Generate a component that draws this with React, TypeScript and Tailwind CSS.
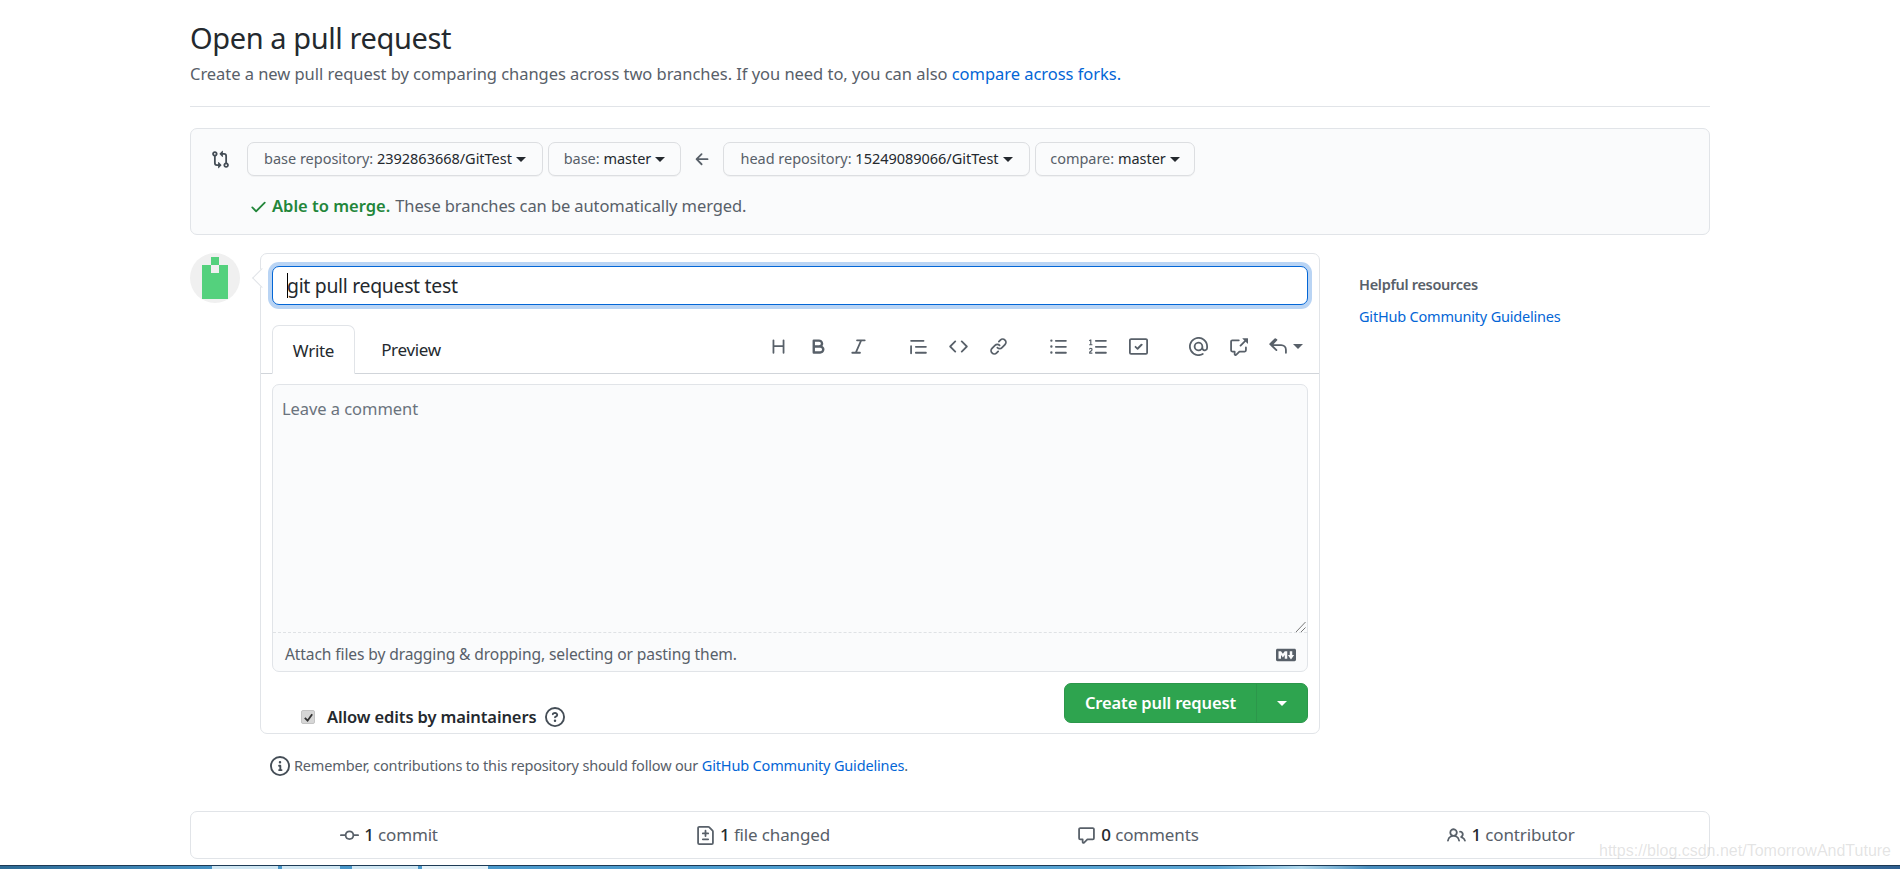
import React from "react";

const P: Record<string, string> = {
  compare: "M9.573.677L7.177 3.073a.25.25 0 000 .354l2.396 2.396A.25.25 0 0010 5.646V4h1a1 1 0 011 1v5.628a2.251 2.251 0 101.5 0V5A2.5 2.5 0 0011 2.5h-1V.854a.25.25 0 00-.427-.177zM6 12v-1.646a.25.25 0 01.427-.177l2.396 2.396a.25.25 0 010 .354l-2.396 2.396A.25.25 0 016 15.146V13.5H5A2.5 2.5 0 012.5 11V5.372a2.25 2.25 0 111.5 0V11a1 1 0 001 1h1zm6.75 0a.75.75 0 100 1.5.75.75 0 000-1.5zM4 3.25a.75.75 0 11-1.5 0 .75.75 0 011.5 0z",
  check: "M13.78 4.22a.75.75 0 010 1.06l-7.25 7.25a.75.75 0 01-1.06 0L2.22 9.28a.75.75 0 011.06-1.06L6 10.94l6.72-6.72a.75.75 0 011.06 0z",
  arrow: "M7.78 12.53a.75.75 0 01-1.06 0L2.47 8.28a.75.75 0 010-1.06l4.25-4.25a.75.75 0 011.06 1.06L4.81 7h7.44a.75.75 0 010 1.5H4.81l2.97 2.97a.75.75 0 010 1.06z",
  heading: "M3.75 2a.75.75 0 01.75.75V7h7V2.75a.75.75 0 011.5 0v10.5a.75.75 0 01-1.5 0V8.5h-7v4.75a.75.75 0 01-1.5 0V2.75A.75.75 0 013.75 2z",
  bold: "M4 2a1 1 0 00-1 1v10a1 1 0 001 1h5.5a3.5 3.5 0 001.852-6.47A3.5 3.5 0 008.5 2H4zm4.5 5a1.5 1.5 0 100-3H5v3h3.5zM5 9v3h4.5a1.5 1.5 0 000-3H5z",
  italic: "M6 2.75A.75.75 0 016.75 2h6.5a.75.75 0 010 1.5h-2.505l-3.858 9H9.25a.75.75 0 010 1.5h-6.5a.75.75 0 010-1.5h2.505l3.858-9H6.75A.75.75 0 016 2.75z",
  quote: "M1.75 2.5a.75.75 0 000 1.5h10.5a.75.75 0 000-1.5H1.75zm4 5a.75.75 0 000 1.5h8.5a.75.75 0 000-1.5h-8.5zm0 5a.75.75 0 000 1.5h8.5a.75.75 0 000-1.5h-8.5zM2.5 7.75a.75.75 0 00-1.5 0v6a.75.75 0 001.5 0v-6z",
  code: "M4.72 3.22a.75.75 0 011.06 1.06L2.06 8l3.72 3.72a.75.75 0 11-1.06 1.06L.47 8.53a.75.75 0 010-1.06l4.25-4.25zm6.56 0a.75.75 0 10-1.06 1.06L13.94 8l-3.72 3.72a.75.75 0 101.06 1.06l4.25-4.25a.75.75 0 000-1.06l-4.25-4.25z",
  link: "M7.775 3.275a.75.75 0 001.06 1.06l1.25-1.25a2 2 0 112.83 2.83l-2.5 2.5a2 2 0 01-2.83 0 .75.75 0 00-1.06 1.06 3.5 3.5 0 004.95 0l2.5-2.5a3.5 3.5 0 00-4.95-4.95l-1.25 1.25zm-4.69 9.64a2 2 0 010-2.83l2.5-2.5a2 2 0 012.83 0 .75.75 0 001.06-1.06 3.5 3.5 0 00-4.95 0l-2.5 2.5a3.5 3.5 0 004.95 4.95l1.25-1.25a.75.75 0 00-1.06-1.06l-1.25 1.25a2 2 0 01-2.83 0z",
  ul: "M2 4a1 1 0 100-2 1 1 0 000 2zm3.75-1.5a.75.75 0 000 1.5h8.5a.75.75 0 000-1.5h-8.5zm0 5a.75.75 0 000 1.5h8.5a.75.75 0 000-1.5h-8.5zm0 5a.75.75 0 000 1.5h8.5a.75.75 0 000-1.5h-8.5zM3 8a1 1 0 11-2 0 1 1 0 012 0zm-1 6a1 1 0 100-2 1 1 0 000 2z",
  ol: "M2.003 2.5a.5.5 0 00-.723-.447l-1.003.5a.5.5 0 00.446.895l.28-.14V6H.5a.5.5 0 000 1h2.006a.5.5 0 100-1h-.503V2.5zM5 3.25a.75.75 0 01.75-.75h8.5a.75.75 0 010 1.5h-8.5A.75.75 0 015 3.25zm0 5a.75.75 0 01.75-.75h8.5a.75.75 0 010 1.5h-8.5A.75.75 0 015 8.25zm0 5a.75.75 0 01.75-.75h8.5a.75.75 0 010 1.5h-8.5a.75.75 0 01-.75-.75zM.924 10.32l.003-.004a.851.851 0 01.144-.153A.66.66 0 011.5 10c.195 0 .306.068.374.146a.57.57 0 01.128.376c0 .453-.269.682-.8 1.078l-.035.025C.692 11.98 0 12.495 0 13.5a.5.5 0 00.5.5h2.003a.5.5 0 000-1H1.146c.132-.197.351-.372.654-.597l.047-.035c.47-.35 1.156-.858 1.156-1.845 0-.365-.118-.744-.377-1.038-.268-.303-.658-.484-1.126-.484-.48 0-.84.202-1.068.392a1.858 1.858 0 00-.348.384l-.007.011-.002.004-.001.002-.001.001a.5.5 0 00.851.525z",
  task: "M1.75 1h12.5c.966 0 1.75.784 1.75 1.75v10.5A1.75 1.75 0 0114.25 15H1.75A1.75 1.75 0 010 13.25V2.75C0 1.784.784 1 1.75 1zM1.5 2.75v10.5c0 .138.112.25.25.25h12.5a.25.25 0 00.25-.25V2.75a.25.25 0 00-.25-.25H1.75a.25.25 0 00-.25.25zm9.78 3.22a.75.75 0 010 1.06l-3.5 3.5a.75.75 0 01-1.06 0l-1.75-1.75a.75.75 0 111.06-1.06L7 8.94l2.97-2.97a.75.75 0 011.06 0z",
  mention: "M4.75 2.37a6.5 6.5 0 006.5 11.26.75.75 0 01.75 1.298 8 8 0 113.994-7.273.754.754 0 01.006.095v1.5a2.75 2.75 0 01-5.072 1.475A4 4 0 1112 8v1.25a1.25 1.25 0 002.5 0V7.867a6.5 6.5 0 00-9.75-5.496V2.37zM10.5 8a2.5 2.5 0 10-5 0 2.5 2.5 0 005 0z",
  ref: "M16 1.25v4.146a.25.25 0 01-.427.177L14.03 4.03l-3.75 3.75a.75.75 0 11-1.06-1.06l3.75-3.75-1.543-1.543A.25.25 0 0111.604 1h4.146a.25.25 0 01.25.25zM2.75 3.5a.25.25 0 00-.25.25v7.5c0 .138.112.25.25.25h2a.75.75 0 01.75.75v2.19l2.72-2.72a.75.75 0 01.53-.22h4.5a.25.25 0 00.25-.25v-2.5a.75.75 0 111.5 0v2.5A1.75 1.75 0 0113.25 13H9.06l-2.573 2.573A1.457 1.457 0 014 14.543V13H2.75A1.75 1.75 0 011 11.25v-7.5C1 2.784 1.784 2 2.75 2h5.5a.75.75 0 010 1.5h-5.5z",
  reply: "M6.78 1.97a.75.75 0 010 1.06L3.81 6h6.44A4.75 4.75 0 0115 10.75v2.5a.75.75 0 01-1.5 0v-2.5a3.25 3.25 0 00-3.25-3.25H3.81l2.97 2.97a.75.75 0 11-1.06 1.06L.47 6.53a.75.75 0 010-1.06l4.25-4.25a.75.75 0 011.06 0z",
  question: "M8 1.5a6.5 6.5 0 100 13 6.5 6.5 0 000-13zM0 8a8 8 0 1116 0A8 8 0 010 8zm9 3a1 1 0 11-2 0 1 1 0 012 0zM6.92 6.085c.081-.16.19-.299.34-.398.145-.097.371-.187.74-.187.28 0 .553.087.738.225A.613.613 0 019 6.25c0 .177-.04.264-.077.318a.956.956 0 01-.277.245c-.076.051-.158.1-.258.161l-.007.004a7.728 7.728 0 00-.313.195 2.416 2.416 0 00-.692.661.75.75 0 001.248.832.956.956 0 01.276-.245 6.3 6.3 0 01.26-.16l.006-.004c.093-.057.204-.123.313-.195.222-.149.487-.355.692-.662.214-.32.329-.702.329-1.15 0-.76-.36-1.348-.863-1.725A2.76 2.76 0 008 4c-.631 0-1.155.16-1.572.438-.413.276-.68.638-.849.977a.75.75 0 101.342.67z",
  info: "M8 1.5a6.5 6.5 0 100 13 6.5 6.5 0 000-13zM0 8a8 8 0 1116 0A8 8 0 010 8zm6.5-.25A.75.75 0 017.25 7h1a.75.75 0 01.75.75v2.75h.25a.75.75 0 010 1.5h-2a.75.75 0 010-1.5h.25v-2h-.25a.75.75 0 01-.75-.75zM8 6a1 1 0 100-2 1 1 0 000 2z",
  commit: "M10.5 7.75a2.5 2.5 0 11-5 0 2.5 2.5 0 015 0zm1.43.75a4.002 4.002 0 01-7.86 0H.75a.75.75 0 110-1.5h3.32a4.001 4.001 0 017.86 0h3.32a.75.75 0 110 1.5h-3.32z",
  file: "M2.75 1.5a.25.25 0 00-.25.25v12.5c0 .138.112.25.25.25h10.5a.25.25 0 00.25-.25V4.664a.25.25 0 00-.073-.177l-2.914-2.914a.25.25 0 00-.177-.073H2.75zM1 1.75C1 .784 1.784 0 2.75 0h7.586c.464 0 .909.184 1.237.513l2.914 2.914c.329.328.513.773.513 1.237v9.586A1.75 1.75 0 0113.25 16H2.75A1.75 1.75 0 011 14.25V1.75zm7 1.5a.75.75 0 01.75.75v1.5h1.5a.75.75 0 010 1.5h-1.5v1.5a.75.75 0 01-1.5 0V7h-1.5a.75.75 0 010-1.5h1.5V4A.75.75 0 018 3.25zm-3 8a.75.75 0 01.75-.75h4.5a.75.75 0 010 1.5h-4.5a.75.75 0 01-.75-.75z",
  comment: "M2.75 2.5a.25.25 0 00-.25.25v7.5c0 .138.112.25.25.25h2a.75.75 0 01.75.75v2.19l2.72-2.72a.75.75 0 01.53-.22h4.5a.25.25 0 00.25-.25v-7.5a.25.25 0 00-.25-.25H2.75zM1 2.75C1 1.784 1.784 1 2.75 1h10.5c.966 0 1.75.784 1.75 1.75v7.5A1.75 1.75 0 0113.25 12H9.06l-2.573 2.573A1.457 1.457 0 014 13.543V12H2.75A1.75 1.75 0 011 10.25v-7.5z",
  people: "M5.5 3.5a2 2 0 100 4 2 2 0 000-4zM2 5.5a3.5 3.5 0 115.898 2.549 5.507 5.507 0 013.034 4.084.75.75 0 11-1.482.235 4.001 4.001 0 00-7.9 0 .75.75 0 01-1.482-.236A5.507 5.507 0 013.102 8.05 3.49 3.49 0 012 5.5zM11 4a.75.75 0 100 1.5 1.5 1.5 0 01.666 2.844.75.75 0 00-.416.672v.352a.75.75 0 00.574.73c1.2.289 2.162 1.2 2.522 2.372a.75.75 0 101.434-.44 5.01 5.01 0 00-2.56-3.012A3 3 0 0011 4z",
  markdown: "M14.85 3H1.15C.52 3 0 3.52 0 4.15v7.69C0 12.48.52 13 1.15 13h13.69c.64 0 1.15-.52 1.15-1.15v-7.7C16 3.52 15.48 3 14.85 3zM9 11H7V8L5.5 9.92 4 8v3H2V5h2l1.5 2L7 5h2v6zm2.99.5L9.5 8H11V5h2v3h1.5l-2.51 3.5z",
};

function Icon({ n, s = 19, c = "" }: { n: string; s?: number; c?: string }) {
  return (
    <svg viewBox="0 0 16 16" width={s} height={s} fill="currentColor" className={"shrink-0 " + c}>
      <path fillRule="evenodd" d={P[n]} />
    </svg>
  );
}

function Caret({ c = "border-t-[#24292e]" }: { c?: string }) {
  return <span className={"inline-block w-0 h-0 border-x-[5px] border-t-[5px] border-x-transparent " + c} />;
}

function Select({ label, value, w }: { label: string; value: string; w: string }) {
  return (
    <div className={"h-[34px] flex items-center justify-center gap-[4px] bg-[#fafbfc] border border-[#dcdee1] rounded-[7px] shadow-[0_1px_0_rgba(27,31,35,0.04)] text-[14.5px] tracking-[-0.02px] whitespace-nowrap " + w}>
      <span><span className="text-[#586069]">{label} </span><span className="text-[#24292e]">{value}</span></span>
      <Caret />
    </div>
  );
}

function Tool({ n }: { n: string }) {
  return (
    <div className="w-[40px] flex justify-center text-[#586069]">
      <Icon n={n} />
    </div>
  );
}

function Stat({ n, num, label, c = "" }: { n: string; num: string; label: string; c?: string }) {
  return (
    <div className={"flex items-center justify-center gap-[5px] text-[17px] tracking-[-0.15px] text-[#586069] " + c}>
      <Icon n={n} />
      <span><span className="font-medium text-[#24292e]">{num}</span> {label}</span>
    </div>
  );
}

export default function App() {
  return (
    <div className="relative w-[1900px] h-[869px] overflow-hidden bg-white flex flex-col font-['Noto_Sans',sans-serif] text-[#24292e]">
      <div className="pl-[190px] pr-[190px] flex flex-col">
        <h1 className="mt-[20px] text-[29px] leading-[36px] font-normal tracking-[-0.4px]">Open a pull request</h1>
        <p className="mt-[6px] text-[16.5px] leading-[24px] tracking-[-0.04px] text-[#586069]">
          Create a new pull request by comparing changes across two branches. If you need to, you can also{" "}
          <span className="text-[#0366d6]">compare across forks.</span>
        </p>
        <div className="mt-[20px] border-b border-[#e1e4e8]" />

        <div className="mt-[21px] h-[107px] bg-[#fafbfc] border border-[#e1e4e8] rounded-[7px] pl-[20px] pt-[13px]">
          <div className="flex items-center">
            <Icon n="compare" s={19} c="text-[#444d56] mr-[17px]" />
            <Select label="base repository:" value="2392863668/GitTest" w="w-[296px]" />
            <div className="w-[5px]" />
            <Select label="base:" value="master" w="w-[133px]" />
            <div className="w-[42px] flex justify-center text-[#586069]"><Icon n="arrow" s={19} /></div>
            <Select label="head repository:" value="15249089066/GitTest" w="w-[307px]" />
            <div className="w-[5px]" />
            <Select label="compare:" value="master" w="w-[160px]" />
          </div>
          <div className="mt-[18px] ml-[38px] flex items-center h-[24px] text-[16.5px] tracking-[-0.1px] text-[#586069]">
            <Icon n="check" s={19} c="text-[#22863a] mr-[4px]" />
            <span className="font-semibold text-[#22863a] tracking-[0px]">Able to merge.</span>
            <span className="ml-[5px]">These branches can be automatically merged.</span>
          </div>
        </div>

        <div className="mt-[18px] flex items-start">
          <div className="relative w-[50px] h-[50px] rounded-full bg-[#f0f0f0] overflow-hidden shrink-0">
            <div className="absolute left-[12px] top-[12px] w-[26px] h-[34px] bg-[#54d17d]" />
            <div className="absolute left-[21px] top-[4px] w-[8px] h-[8px] bg-[#54d17d]" />
            <div className="absolute left-[21px] top-[12px] w-[8px] h-[8px] bg-[#f0f0f0]" />
          </div>

          <div className="relative ml-[20px] w-[1060px] h-[481px] border border-[#e1e4e8] rounded-[7px] bg-white shrink-0 flex flex-col">
            <div className="absolute left-[-6px] top-[17px] w-[14px] h-[14px] rotate-45 bg-white border-l border-b border-[#e1e4e8]" />
            <div className="relative mx-[11px] mt-[12px] h-[39px] border border-[#0366d6] rounded-[7px] shadow-[0_0_0_4px_rgba(3,102,214,0.28)] bg-white flex items-center pl-[14px] text-[19.4px] tracking-[-0.3px]">
              <span className="w-px h-[25px] bg-black" />
              <span className="ml-[-1px]">git pull request test</span>
            </div>

            <div className="mt-[20px] h-[49px] border-b border-[#d1d5da] flex items-end px-[11px]">
              <div className="w-[83px] h-[49px] mb-[-1px] pt-[2px] border border-[#e1e4e8] border-b-white rounded-t-[7px] bg-white flex items-center justify-center text-[17px] tracking-[-0.3px]">Write</div>
              <div className="w-[112px] h-[49px] pt-[3px] flex items-center justify-center text-[17px] tracking-[-0.3px]">Preview</div>
              <div className="ml-auto h-[48px] flex items-center pb-[6px] pr-[5px]">
                <Tool n="heading" /><Tool n="bold" /><Tool n="italic" />
                <div className="w-[20px]" />
                <Tool n="quote" /><Tool n="code" /><Tool n="link" />
                <div className="w-[20px]" />
                <Tool n="ul" /><Tool n="ol" /><Tool n="task" />
                <div className="w-[20px]" />
                <Tool n="mention" /><Tool n="ref" /><Tool n="reply" />
                <span className="ml-[-5px] flex"><Caret c="border-t-[#586069]" /></span>
              </div>
            </div>

            <div className="relative mx-[11px] mt-[10px] h-[288px] border border-[#e1e4e8] rounded-[7px] bg-[#fafbfc] flex flex-col">
              <div className="flex-1 pl-[9px] pt-[12px] text-[16.5px] leading-[24px] tracking-[-0.06px] text-[#6a737d]">Leave a comment</div>
              <svg width="10" height="12" viewBox="0 0 10 12" className="absolute right-[1px] bottom-[38px]" stroke="#555" fill="none" strokeWidth="0.8">
                <path d="M0 11 L9.5 1 M5 11 L9.5 6.5" />
              </svg>
              <div className="h-[39px] border-t border-dashed border-[#dfe2e5] flex items-center justify-between pl-[12px] pr-[11px] pt-[5px] text-[15.6px] tracking-[-0.12px] text-[#586069]">
                <span>Attach files by dragging &amp; dropping, selecting or pasting them.</span>
                <Icon n="markdown" s={20} />
              </div>
            </div>

            <div className="mx-[11px] mt-[11px] flex justify-between items-start">
              <div className="mt-[24px] ml-[29px] flex items-center h-[20px]">
                <span className="w-[14px] h-[14px] rounded-[2px] bg-[#d6d6d6] border border-[#c4c4c4] flex items-center justify-center">
                  <svg viewBox="0 0 12 12" width="11" height="11" fill="none" stroke="#333" strokeWidth="2"><path d="M2 6.5 L5 9.5 L10 2.5" /></svg>
                </span>
                <span className="ml-[12px] text-[16.5px] font-semibold tracking-[-0.12px]">Allow edits by maintainers</span>
                <Icon n="question" s={20} c="ml-[9px] text-[#444d56]" />
              </div>
              <div className="h-[40px] flex bg-[#2ea44f] border border-[#2c974b] rounded-[7px] text-white shrink-0">
                <div className="w-[192px] flex items-center justify-center text-[16.5px] font-semibold tracking-[-0.13px] border-r border-[#2c974b]">Create pull request</div>
                <div className="w-[50px] flex items-center justify-center"><Caret c="border-t-white" /></div>
              </div>
            </div>
          </div>

          <div className="ml-[39px] pt-[21px] flex flex-col text-[14.5px]">
            <div className="font-semibold text-[#586069] leading-[20px] tracking-[-0.3px]">Helpful resources</div>
            <div className="mt-[12px] text-[#0366d6] leading-[20px] tracking-[-0.2px]">GitHub Community Guidelines</div>
          </div>
        </div>

        <div className="mt-[21px] ml-[80px] h-[22px] flex items-center text-[14.5px] tracking-[-0.17px] text-[#586069]">
          <Icon n="info" s={20} c="text-[#444d56] mr-[4px]" />
          <span>Remember, contributions to this repository should follow our <span className="text-[#0366d6]">GitHub Community Guidelines</span>.</span>
        </div>

        <div className="mt-[34px] h-[48px] border border-[#e1e4e8] rounded-[7px] grid grid-cols-[396px_352px_398px_1fr] items-center">
          <Stat n="commit" num="1" label="commit" />
          <Stat n="file" num="1" label="file changed" />
          <Stat n="comment" num="0" label="comments" />
          <Stat n="people" num="1" label="contributor" c="pr-[24px]" />
        </div>
      </div>

      <div className="mt-auto h-[4px] border-t border-[#1d3a55] bg-[linear-gradient(90deg,#2d6a94_0%,#4795c8_12%,#4d9dcf_40%,#5aa5d3_64%,#b0d8ec_68.5%,#4a90c0_72%,#3a78ab_85%,#2f5f90_100%)] flex pl-[212px]">
        <div className="w-[66px] bg-[#cfe6f2]" />
        <div className="w-[58px] ml-[4px] bg-[#cfe6f2]" />
        <div className="w-[66px] ml-[12px] bg-[#cfe6f2]" />
        <div className="w-[66px] ml-[4px] bg-[#e4f1f8]" />
      </div>

      <div className="absolute left-[1599px] top-[841px] font-['Liberation_Sans',sans-serif] text-[16px] leading-[20px] text-[rgba(170,170,170,0.32)] whitespace-nowrap">
        https://blog.csdn.net/TomorrowAndTuture
      </div>
    </div>
  );
}
